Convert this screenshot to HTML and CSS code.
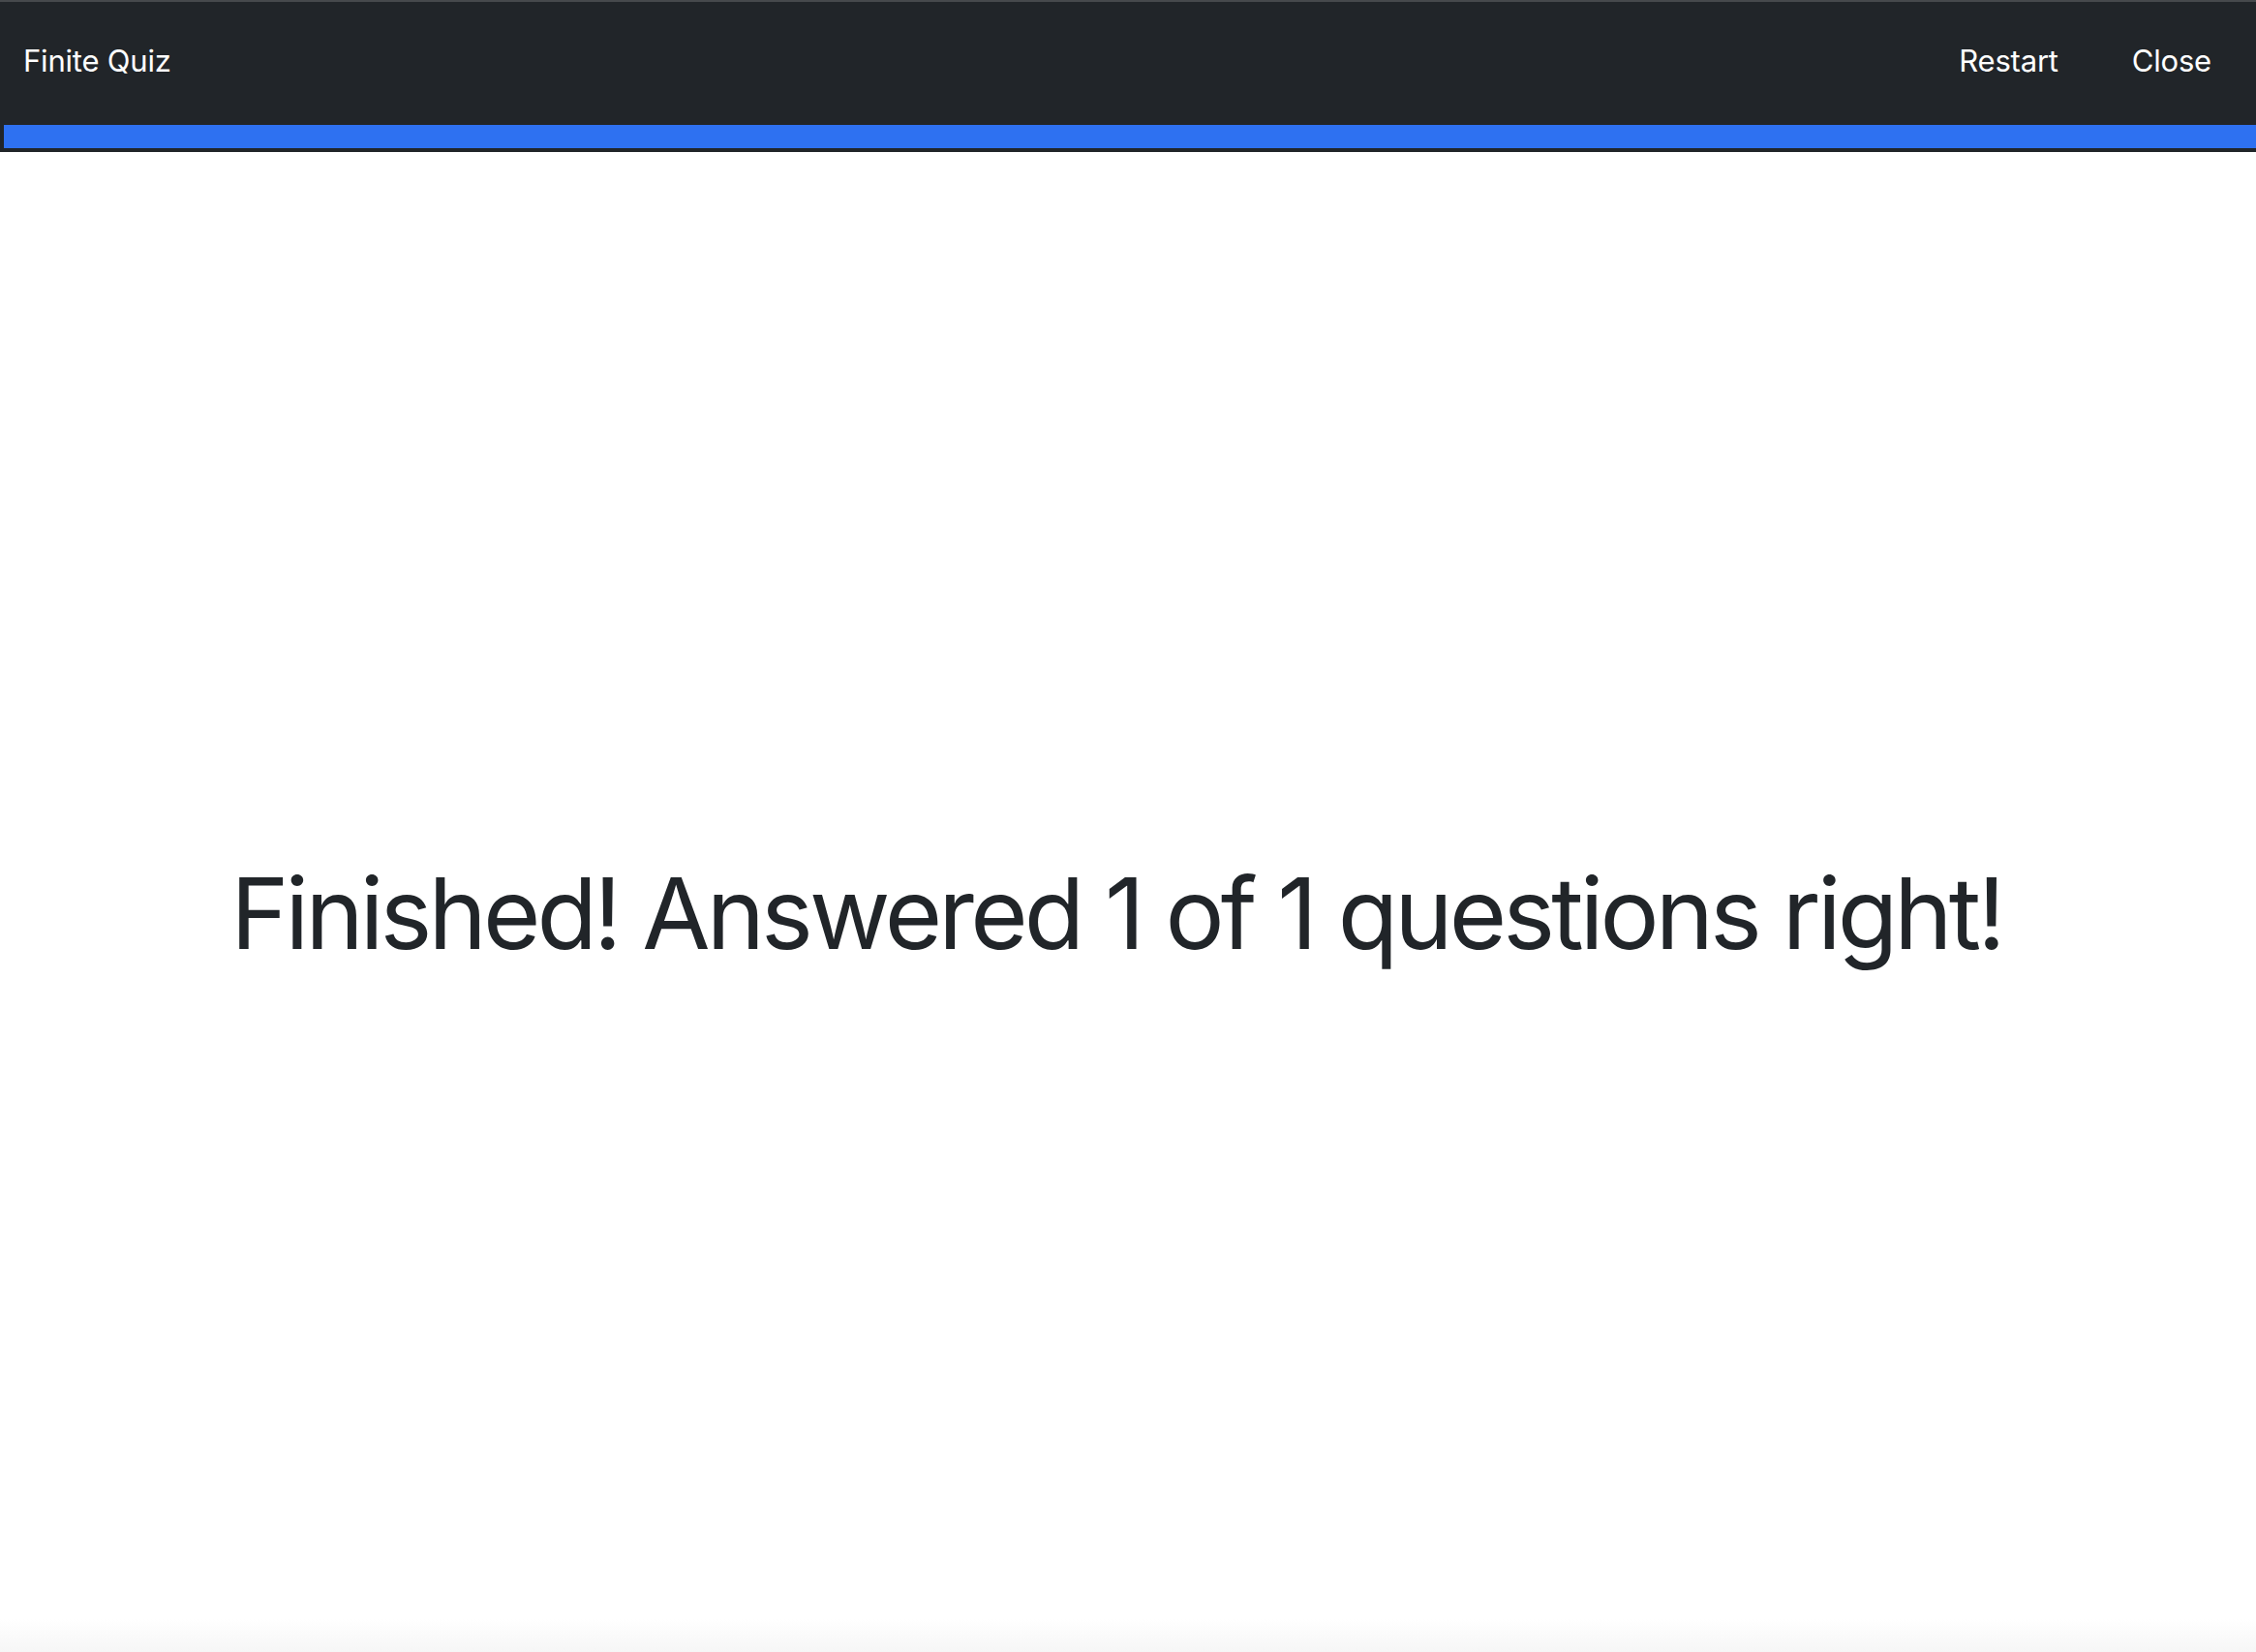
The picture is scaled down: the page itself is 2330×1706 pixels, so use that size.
FILE: index.html
```html
<!DOCTYPE html>
<html lang="en">
<head>
<meta charset="utf-8">
<title>Finite Quiz</title>
<link rel="stylesheet" href="styles.css">
</head>
<body>
<header class="topbar">
  <nav class="nav">
    <a class="brand" href="#">Finite Quiz</a>
    <div class="links">
      <a class="link" href="#">Restart</a>
      <a class="link" href="#">Close</a>
    </div>
  </nav>
  <div class="progress"><div class="progress-fill" style="width:100%"></div></div>
</header>
<main class="content">
  <h1 class="result">Finished! Answered 1 of 1 questions right!</h1>
</main>
<div class="bottom-fade"></div>
</body>
</html>
```

FILE: styles.css
```css
html, body {
  margin: 0;
  padding: 0;
  height: 100%;
}
body {
  display: flex;
  flex-direction: column;
  font-family: Inter, "Noto Sans", "Liberation Sans", sans-serif;
  background: #ffffff;
  color: #212529;
}
.topbar {
  background: #212529;
  border-top: 2px solid #46494c;
  padding: 0 0 4px 4px;
}
.nav {
  height: 121px;
  padding: 0 46px 6px 20px;
  display: flex;
  align-items: center;
  justify-content: space-between;
}
.brand, .link {
  color: #ffffff;
  text-decoration: none;
  font-size: 31px;
  font-weight: 400;
  letter-spacing: -0.2px;
}
.links {
  display: flex;
  gap: 76px;
}
.progress {
  height: 24px;
  background: #212529;
}
.progress-fill {
  height: 100%;
  background: #2e71f1;
}
.content {
  flex: 1;
  display: flex;
  align-items: center;
  justify-content: center;
}
.result {
  margin: 58px 24px 0 0;
  font-size: 102px;
  font-weight: 400;
  line-height: 1.2;
  letter-spacing: -3.9px;
}
.bottom-fade {
  height: 34px;
  background: linear-gradient(#ffffff, #f6f6f6);
}
```
